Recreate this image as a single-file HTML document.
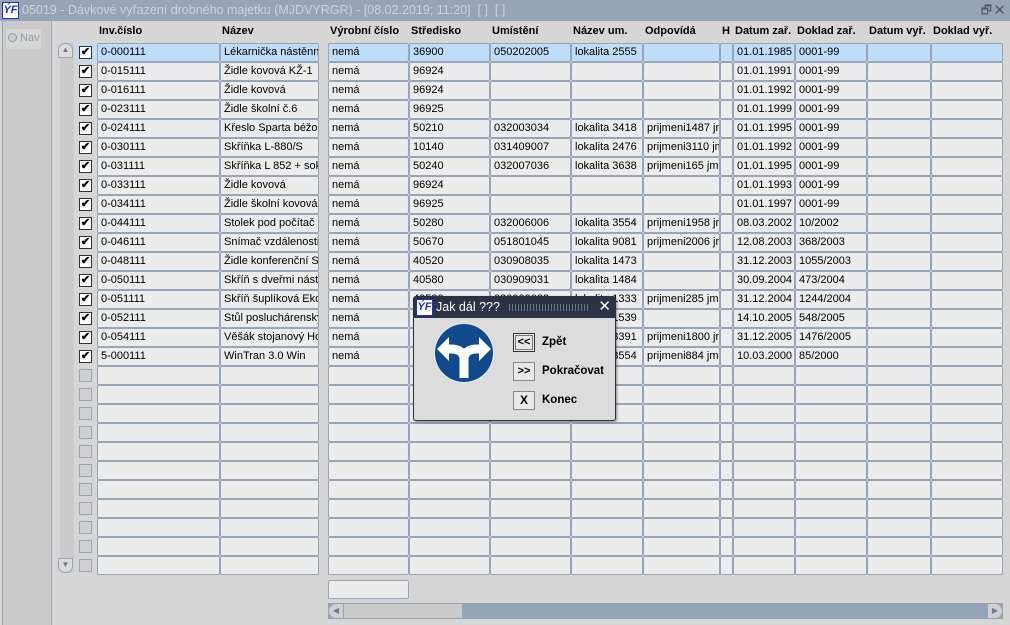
<!DOCTYPE html>
<html><head><meta charset="utf-8"><style>
*{margin:0;padding:0;box-sizing:border-box}
body{width:1010px;height:625px;position:relative;overflow:hidden;background:#d6d6d6;font-family:"Liberation Sans",sans-serif;font-size:11px;color:#000}
.tb{position:absolute;left:0;top:0;width:1010px;height:21px;background:#97a4b5;color:#cdd3dc;font-size:12.5px;line-height:21px;padding-left:22px;white-space:nowrap}
.logo{position:absolute;left:2px;top:2px;width:17px;height:17px;background:#fff;border:1px solid #2030c0;color:#1a2fc8;font:italic bold 11px "Liberation Sans";line-height:15px;text-align:center}
.lp{position:absolute;left:2px;top:21px;width:50px;height:604px;background:#cbcbcb;border-left:1px solid #9aa6b8;border-right:1px solid #9aa6b8}
.hd{position:absolute;top:25px;font-weight:bold;font-size:11px;white-space:nowrap}
.r{position:absolute;left:0;width:1010px;height:19px}
.c{position:absolute;top:0;height:19px;border:1px solid #98a4b7;border-radius:2px;background:#ececec;line-height:17px;padding-left:3px;white-space:nowrap;overflow:hidden}
.sel .c{background:#bfdcf8}
.c1{left:97px;width:123px}.c2{left:220px;width:99px}.c3{left:328px;width:81px}.c4{left:409px;width:81px}.c5{left:490px;width:81px}.c6{left:571px;width:72px}.c7{left:643px;width:77px}.c8{left:720px;width:13px}.c9{left:733px;width:62px}.c10{left:795px;width:72px}.c11{left:867px;width:64px}.c12{left:931px;width:72px}
.cb{position:absolute;left:79px;top:3px;width:13px;height:13px;border:1px solid #333;background:#fff;font-size:11px;line-height:11px;text-align:center;font-weight:bold}
.cb.e{border:1px solid #98a4b7;background:#d0d0d0}
.sel .bg{position:absolute;left:77px;top:0;width:20px;height:19px;background:#bfdcf8}
.btn{position:absolute;left:513px;width:22px;height:19px;border:1px solid #8a8a8a;background:#e8e8e8;font-size:11px;font-weight:bold;text-align:center;line-height:16px}
.bl{position:absolute;left:542px;font-weight:bold;font-size:11.5px}
</style></head><body>
<div class="tb"><div class="logo">ÝF</div>05019 - Dávkové vyřazení drobného majetku (MJDVYRGR) - [08.02.2019; 11:20]&nbsp; [ ]&nbsp; [ ]
<span style="position:absolute;right:18px;top:0;color:#555c68;font-size:12px">🗗</span><span style="position:absolute;right:4px;top:0;color:#555c68;font-size:15px">✕</span></div>
<div class="lp"><div style="position:absolute;left:3px;top:8px;width:35px;height:20px;background:#d6d6d6;color:#8f9bb0;font-size:11px;line-height:18px;padding-left:2px;white-space:nowrap"><span style="display:inline-block;width:9px;height:9px;border:1px solid #8f9bb0;border-radius:50%;background:#c8cdd6;vertical-align:-1px"></span>&nbsp;Nav</div></div>
<div style="position:absolute;left:60px;top:43px;width:14px;height:530px;background:#cbcbcb"></div>
<div style="position:absolute;left:58px;top:43px;width:15px;height:15px;border:1px solid #98a4b7;border-radius:7px 7px 0 0;background:#dcdcdc;color:#6a7890;font-size:8px;text-align:center;line-height:12px">▲</div>
<div style="position:absolute;left:58px;top:558px;width:15px;height:15px;border:1px solid #98a4b7;border-radius:0 0 7px 7px;background:#dcdcdc;color:#6a7890;font-size:8px;text-align:center;line-height:12px">▼</div>
<div class="hd" style="left:99px">Inv.číslo</div><div class="hd" style="left:222px">Název</div><div class="hd" style="left:330px">Výrobní číslo</div><div class="hd" style="left:411px">Středisko</div><div class="hd" style="left:492px">Umístění</div><div class="hd" style="left:573px">Název um.</div><div class="hd" style="left:645px">Odpovídá</div><div class="hd" style="left:722px">H</div><div class="hd" style="left:735px">Datum zař.</div><div class="hd" style="left:797px">Doklad zař.</div><div class="hd" style="left:869px">Datum vyř.</div><div class="hd" style="left:933px">Doklad vyř.</div>

<div class="r sel" style="top:43px"><div class="bg"></div><div class="cb">✔</div><div class="c c1">0-000111</div><div class="c c2">Lékarnička nástěnn</div><div class="c c3">nemá</div><div class="c c4">36900</div><div class="c c5">050202005</div><div class="c c6">lokalita 2555</div><div class="c c7"></div><div class="c c8"></div><div class="c c9">01.01.1985</div><div class="c c10">0001-99</div><div class="c c11"></div><div class="c c12"></div></div>
<div class="r" style="top:62px"><div class="cb">✔</div><div class="c c1">0-015111</div><div class="c c2">Židle kovová KŽ-1</div><div class="c c3">nemá</div><div class="c c4">96924</div><div class="c c5"></div><div class="c c6"></div><div class="c c7"></div><div class="c c8"></div><div class="c c9">01.01.1991</div><div class="c c10">0001-99</div><div class="c c11"></div><div class="c c12"></div></div>
<div class="r" style="top:81px"><div class="cb">✔</div><div class="c c1">0-016111</div><div class="c c2">Židle kovová</div><div class="c c3">nemá</div><div class="c c4">96924</div><div class="c c5"></div><div class="c c6"></div><div class="c c7"></div><div class="c c8"></div><div class="c c9">01.01.1992</div><div class="c c10">0001-99</div><div class="c c11"></div><div class="c c12"></div></div>
<div class="r" style="top:100px"><div class="cb">✔</div><div class="c c1">0-023111</div><div class="c c2">Židle školní č.6</div><div class="c c3">nemá</div><div class="c c4">96925</div><div class="c c5"></div><div class="c c6"></div><div class="c c7"></div><div class="c c8"></div><div class="c c9">01.01.1999</div><div class="c c10">0001-99</div><div class="c c11"></div><div class="c c12"></div></div>
<div class="r" style="top:119px"><div class="cb">✔</div><div class="c c1">0-024111</div><div class="c c2">Křeslo Sparta béžo</div><div class="c c3">nemá</div><div class="c c4">50210</div><div class="c c5">032003034</div><div class="c c6">lokalita 3418</div><div class="c c7">prijmeni1487 jm</div><div class="c c8"></div><div class="c c9">01.01.1995</div><div class="c c10">0001-99</div><div class="c c11"></div><div class="c c12"></div></div>
<div class="r" style="top:138px"><div class="cb">✔</div><div class="c c1">0-030111</div><div class="c c2">Skříňka L-880/S</div><div class="c c3">nemá</div><div class="c c4">10140</div><div class="c c5">031409007</div><div class="c c6">lokalita 2476</div><div class="c c7">prijmeni3110 jm</div><div class="c c8"></div><div class="c c9">01.01.1992</div><div class="c c10">0001-99</div><div class="c c11"></div><div class="c c12"></div></div>
<div class="r" style="top:157px"><div class="cb">✔</div><div class="c c1">0-031111</div><div class="c c2">Skříňka L 852 + sok</div><div class="c c3">nemá</div><div class="c c4">50240</div><div class="c c5">032007036</div><div class="c c6">lokalita 3638</div><div class="c c7">prijmeni165 jme</div><div class="c c8"></div><div class="c c9">01.01.1995</div><div class="c c10">0001-99</div><div class="c c11"></div><div class="c c12"></div></div>
<div class="r" style="top:176px"><div class="cb">✔</div><div class="c c1">0-033111</div><div class="c c2">Židle kovová</div><div class="c c3">nemá</div><div class="c c4">96924</div><div class="c c5"></div><div class="c c6"></div><div class="c c7"></div><div class="c c8"></div><div class="c c9">01.01.1993</div><div class="c c10">0001-99</div><div class="c c11"></div><div class="c c12"></div></div>
<div class="r" style="top:195px"><div class="cb">✔</div><div class="c c1">0-034111</div><div class="c c2">Židle školní kovová</div><div class="c c3">nemá</div><div class="c c4">96925</div><div class="c c5"></div><div class="c c6"></div><div class="c c7"></div><div class="c c8"></div><div class="c c9">01.01.1997</div><div class="c c10">0001-99</div><div class="c c11"></div><div class="c c12"></div></div>
<div class="r" style="top:214px"><div class="cb">✔</div><div class="c c1">0-044111</div><div class="c c2">Stolek pod počítač</div><div class="c c3">nemá</div><div class="c c4">50280</div><div class="c c5">032006006</div><div class="c c6">lokalita 3554</div><div class="c c7">prijmeni1958 jm</div><div class="c c8"></div><div class="c c9">08.03.2002</div><div class="c c10">10/2002</div><div class="c c11"></div><div class="c c12"></div></div>
<div class="r" style="top:233px"><div class="cb">✔</div><div class="c c1">0-046111</div><div class="c c2">Snímač vzdálenosti</div><div class="c c3">nemá</div><div class="c c4">50670</div><div class="c c5">051801045</div><div class="c c6">lokalita 9081</div><div class="c c7">prijmeni2006 jm</div><div class="c c8"></div><div class="c c9">12.08.2003</div><div class="c c10">368/2003</div><div class="c c11"></div><div class="c c12"></div></div>
<div class="r" style="top:252px"><div class="cb">✔</div><div class="c c1">0-048111</div><div class="c c2">Židle konferenční S</div><div class="c c3">nemá</div><div class="c c4">40520</div><div class="c c5">030908035</div><div class="c c6">lokalita 1473</div><div class="c c7"></div><div class="c c8"></div><div class="c c9">31.12.2003</div><div class="c c10">1055/2003</div><div class="c c11"></div><div class="c c12"></div></div>
<div class="r" style="top:271px"><div class="cb">✔</div><div class="c c1">0-050111</div><div class="c c2">Skříň s dveřmi násta</div><div class="c c3">nemá</div><div class="c c4">40580</div><div class="c c5">030909031</div><div class="c c6">lokalita 1484</div><div class="c c7"></div><div class="c c8"></div><div class="c c9">30.09.2004</div><div class="c c10">473/2004</div><div class="c c11"></div><div class="c c12"></div></div>
<div class="r" style="top:290px"><div class="cb">✔</div><div class="c c1">0-051111</div><div class="c c2">Skříň šuplíková Ekon</div><div class="c c3">nemá</div><div class="c c4">40580</div><div class="c c5">030909033</div><div class="c c6">lokalita 1333</div><div class="c c7">prijmeni285 jme</div><div class="c c8"></div><div class="c c9">31.12.2004</div><div class="c c10">1244/2004</div><div class="c c11"></div><div class="c c12"></div></div>
<div class="r" style="top:309px"><div class="cb">✔</div><div class="c c1">0-052111</div><div class="c c2">Stůl posluchárensky</div><div class="c c3">nemá</div><div class="c c4">40580</div><div class="c c5">030909035</div><div class="c c6">lokalita 1539</div><div class="c c7"></div><div class="c c8"></div><div class="c c9">14.10.2005</div><div class="c c10">548/2005</div><div class="c c11"></div><div class="c c12"></div></div>
<div class="r" style="top:328px"><div class="cb">✔</div><div class="c c1">0-054111</div><div class="c c2">Věšák stojanový Ho</div><div class="c c3">nemá</div><div class="c c4">50280</div><div class="c c5">032006009</div><div class="c c6">lokalita 3391</div><div class="c c7">prijmeni1800 jm</div><div class="c c8"></div><div class="c c9">31.12.2005</div><div class="c c10">1476/2005</div><div class="c c11"></div><div class="c c12"></div></div>
<div class="r" style="top:347px"><div class="cb">✔</div><div class="c c1">5-000111</div><div class="c c2">WinTran 3.0 Win</div><div class="c c3">nemá</div><div class="c c4">50280</div><div class="c c5">032006006</div><div class="c c6">lokalita 3554</div><div class="c c7">prijmeni884 jme</div><div class="c c8"></div><div class="c c9">10.03.2000</div><div class="c c10">85/2000</div><div class="c c11"></div><div class="c c12"></div></div>

<div class="r" style="top:366px"><div class="cb e"></div><div class="c c1"></div><div class="c c2"></div><div class="c c3"></div><div class="c c4"></div><div class="c c5"></div><div class="c c6"></div><div class="c c7"></div><div class="c c8"></div><div class="c c9"></div><div class="c c10"></div><div class="c c11"></div><div class="c c12"></div></div>
<div class="r" style="top:385px"><div class="cb e"></div><div class="c c1"></div><div class="c c2"></div><div class="c c3"></div><div class="c c4"></div><div class="c c5"></div><div class="c c6"></div><div class="c c7"></div><div class="c c8"></div><div class="c c9"></div><div class="c c10"></div><div class="c c11"></div><div class="c c12"></div></div>
<div class="r" style="top:404px"><div class="cb e"></div><div class="c c1"></div><div class="c c2"></div><div class="c c3"></div><div class="c c4"></div><div class="c c5"></div><div class="c c6"></div><div class="c c7"></div><div class="c c8"></div><div class="c c9"></div><div class="c c10"></div><div class="c c11"></div><div class="c c12"></div></div>
<div class="r" style="top:423px"><div class="cb e"></div><div class="c c1"></div><div class="c c2"></div><div class="c c3"></div><div class="c c4"></div><div class="c c5"></div><div class="c c6"></div><div class="c c7"></div><div class="c c8"></div><div class="c c9"></div><div class="c c10"></div><div class="c c11"></div><div class="c c12"></div></div>
<div class="r" style="top:442px"><div class="cb e"></div><div class="c c1"></div><div class="c c2"></div><div class="c c3"></div><div class="c c4"></div><div class="c c5"></div><div class="c c6"></div><div class="c c7"></div><div class="c c8"></div><div class="c c9"></div><div class="c c10"></div><div class="c c11"></div><div class="c c12"></div></div>
<div class="r" style="top:461px"><div class="cb e"></div><div class="c c1"></div><div class="c c2"></div><div class="c c3"></div><div class="c c4"></div><div class="c c5"></div><div class="c c6"></div><div class="c c7"></div><div class="c c8"></div><div class="c c9"></div><div class="c c10"></div><div class="c c11"></div><div class="c c12"></div></div>
<div class="r" style="top:480px"><div class="cb e"></div><div class="c c1"></div><div class="c c2"></div><div class="c c3"></div><div class="c c4"></div><div class="c c5"></div><div class="c c6"></div><div class="c c7"></div><div class="c c8"></div><div class="c c9"></div><div class="c c10"></div><div class="c c11"></div><div class="c c12"></div></div>
<div class="r" style="top:499px"><div class="cb e"></div><div class="c c1"></div><div class="c c2"></div><div class="c c3"></div><div class="c c4"></div><div class="c c5"></div><div class="c c6"></div><div class="c c7"></div><div class="c c8"></div><div class="c c9"></div><div class="c c10"></div><div class="c c11"></div><div class="c c12"></div></div>
<div class="r" style="top:518px"><div class="cb e"></div><div class="c c1"></div><div class="c c2"></div><div class="c c3"></div><div class="c c4"></div><div class="c c5"></div><div class="c c6"></div><div class="c c7"></div><div class="c c8"></div><div class="c c9"></div><div class="c c10"></div><div class="c c11"></div><div class="c c12"></div></div>
<div class="r" style="top:537px"><div class="cb e"></div><div class="c c1"></div><div class="c c2"></div><div class="c c3"></div><div class="c c4"></div><div class="c c5"></div><div class="c c6"></div><div class="c c7"></div><div class="c c8"></div><div class="c c9"></div><div class="c c10"></div><div class="c c11"></div><div class="c c12"></div></div>
<div class="r" style="top:556px"><div class="cb e"></div><div class="c c1"></div><div class="c c2"></div><div class="c c3"></div><div class="c c4"></div><div class="c c5"></div><div class="c c6"></div><div class="c c7"></div><div class="c c8"></div><div class="c c9"></div><div class="c c10"></div><div class="c c11"></div><div class="c c12"></div></div>

<div style="position:absolute;left:328px;top:580px;width:81px;height:19px;border:1px solid #98a4b7;border-radius:2px;background:#ececec"></div>
<div style="position:absolute;left:328px;top:603px;width:675px;height:16px;background:#94a3b6">
 <div style="position:absolute;left:1px;top:1px;width:14px;height:14px;background:#d0d0d0;border-radius:7px 0 0 7px;color:#6a7890;font-size:8px;line-height:14px;text-align:center">◀</div>
 <div style="position:absolute;left:16px;top:1px;width:118px;height:14px;background:#cbcbcb"></div>
 <div style="position:absolute;right:1px;top:1px;width:14px;height:14px;background:#d0d0d0;border-radius:0 7px 7px 0;color:#6a7890;font-size:8px;line-height:14px;text-align:center">▶</div>
</div>

<div style="position:absolute;left:413px;top:296px;width:203px;height:125px;background:#dcdcdc;border:1px solid #2a3240;border-radius:3px;box-shadow:1px 1px 2px rgba(0,0,0,.4)">
 <div style="position:absolute;left:0;top:0;width:201px;height:21px;background:#2b3444;color:#fff;font-size:12.5px;line-height:20px;padding-left:22px">Jak dál ???
  <span style="position:absolute;left:95px;top:7px;width:80px;height:7px;background:repeating-linear-gradient(90deg,#6a7384 0 1px,transparent 1px 3px)"></span>
  <span style="position:absolute;right:4px;top:0;font-size:15px">✕</span></div>
 <div style="position:absolute;left:2px;top:2px;width:17px;height:17px;background:#fff;border:1px solid #2030c0;color:#1a2fc8;font:italic bold 11px 'Liberation Sans';line-height:15px;text-align:center">ÝF</div>
 <svg style="position:absolute;left:20px;top:25px" width="60" height="62" viewBox="0 0 60 62">
  <circle cx="30" cy="31" r="30" fill="#fff" opacity=".4"/>
  <circle cx="30" cy="31" r="29" fill="#0e4a8c"/>
  <path d="M30 56 V38 Q30 27 17 27 H12 M30 38 Q30 27 43 27 H48" stroke="#fff" stroke-width="9" fill="none"/>
  <polygon points="3,27 15,15 15,39" fill="#fff"/><polygon points="57,27 45,15 45,39" fill="#fff"/>
 </svg>
</div>
<div class="btn" style="top:333px;border:1px solid #333;box-shadow:inset 0 0 0 1px #e8e8e8, inset 0 0 0 2px #777">&lt;&lt;</div><div class="bl" style="top:336px">Zpět</div>
<div class="btn" style="top:362px">&gt;&gt;</div><div class="bl" style="top:365px">Pokračovat</div>
<div class="btn" style="top:391px;font-size:12px">X</div><div class="bl" style="top:394px">Konec</div>
</body></html>
